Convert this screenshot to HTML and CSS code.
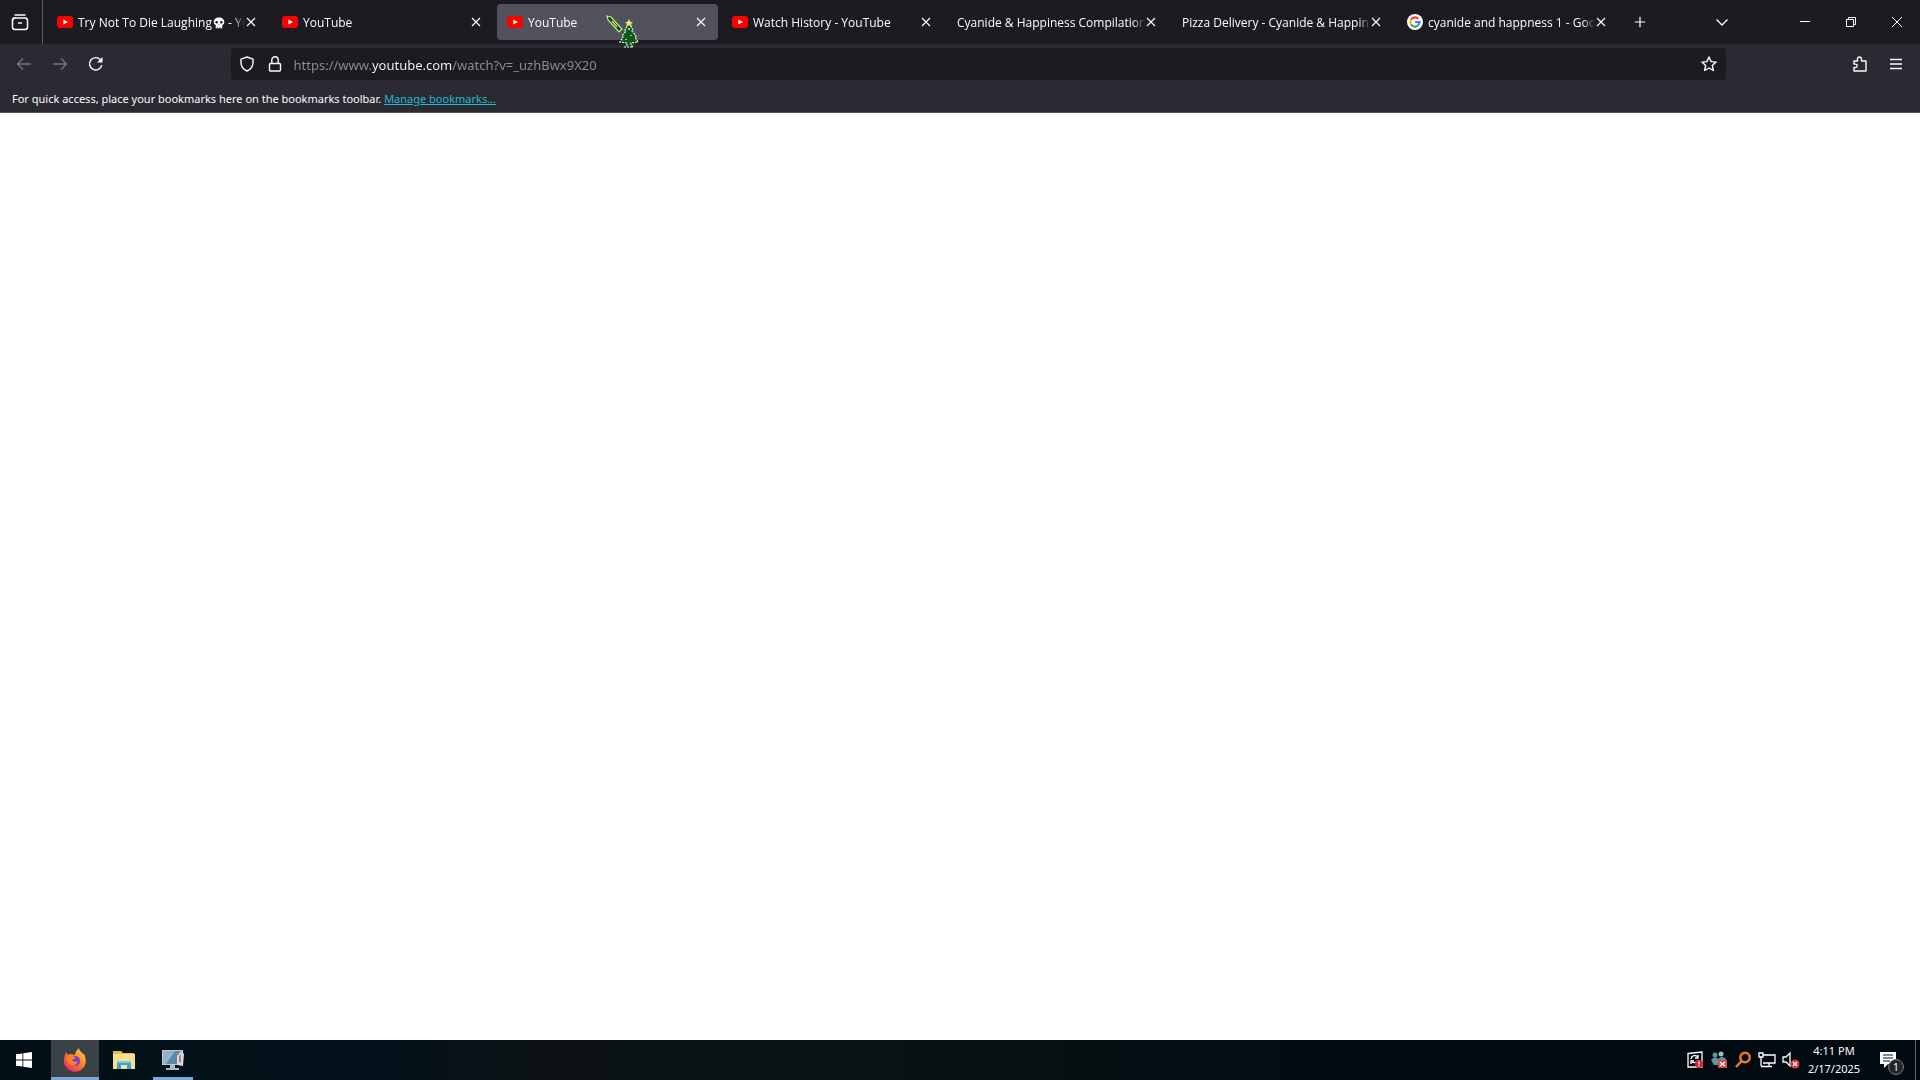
FILE: index.html
```html
<!DOCTYPE html>
<html lang="en">
<head>
<meta charset="utf-8">
<title>YouTube</title>
<link rel="stylesheet" href="styles.css">
</head>
<body>
<svg class="defs" aria-hidden="true">
  <symbol id="yt" viewBox="0 0 16 16"><rect x="0" y="2" width="16" height="12" rx="3" fill="#f00"/><path d="M6.4 5.4v5.2L10.8 8z" fill="#fff"/></symbol>
  <symbol id="x" viewBox="0 0 16 16"><path d="M4 4l8 8M12 4l-8 8" fill="none" stroke="currentColor" stroke-width="1.2"/></symbol>
</svg>

<header class="browser">
  <div class="tabstrip">
    <button class="view" aria-label="Firefox View">
      <svg width="20" height="20" viewBox="0 0 20 20" fill="none" stroke="currentColor" stroke-width="1.5" stroke-linecap="round"><path d="M5 3h10"/><rect x="2.5" y="6" width="15" height="11.5" rx="2.5"/><path d="M2.5 8.5Q2.5 6 5 6M8.500 11h3"/></svg>
    </button>
    <div class="tabs">
      <div class="tab"><svg class="fav"><use href="#yt"/></svg><span class="label">Try Not To Die Laughing<svg class="skull" viewBox="0 0 12 12"><path d="M6 .5C2.7 .5 .7 2.6 .7 5c0 1.500 .8 2.500 2 3v3.300h6.600V8c1.200-.5 2-1.500 2-3C11.300 2.600 9.300 .5 6 .5z" fill="#fff"/><circle cx="3.700" cy="5.300" r="1.300" fill="#1c1b22"/><circle cx="8.300" cy="5.300" r="1.300" fill="#1c1b22"/><path d="M6 7l.6 1H5.400z" fill="#1c1b22"/><path d="M4.700 9.800v1.500M7.300 9.800v1.500" stroke="#1c1b22" stroke-width=".5"/></svg> - YouTube</span><button class="close" aria-label="Close tab"><svg><use href="#x"/></svg></button></div>
      <div class="tab"><svg class="fav"><use href="#yt"/></svg><span class="label">YouTube</span><button class="close" aria-label="Close tab"><svg><use href="#x"/></svg></button></div>
      <div class="tab active"><svg class="fav"><use href="#yt"/></svg><span class="label">YouTube</span><button class="close" aria-label="Close tab"><svg><use href="#x"/></svg></button>
        <svg class="cursor" width="36" height="36" viewBox="0 0 36 36"><path d="M2 2l4 1 11 12-3 3L3 6z" fill="#164a12" stroke="#b8f08a" stroke-width="1.200"/><path d="M7 7l5 6" stroke="#e8d040" stroke-width="1.500"/><path d="M24 9l4 7-1 1 4 5-1 1 3 5-7 1v2l2 2h-8l2-2v-2l-7-1 3-5-1-1 4-5-1-1z" fill="#0b5a1c" stroke="#e4f8d8" stroke-width="1.200" stroke-dasharray="2 1"/><path d="M23 14h2v2h-2zM25 21h2v1h-2zM20 25h2v1h-2z" fill="#5fe0a0"/><path d="M24 5l1.500 3H28l-2 2 1 3-3-2-3 2 1-3-2-2h2.500z" fill="#f4ec50"/></svg>
      </div>
      <div class="tab"><svg class="fav"><use href="#yt"/></svg><span class="label">Watch History - YouTube</span><button class="close" aria-label="Close tab"><svg><use href="#x"/></svg></button></div>
      <div class="tab"><span class="label">Cyanide &amp; Happiness Compilation</span><button class="close" aria-label="Close tab"><svg><use href="#x"/></svg></button></div>
      <div class="tab"><span class="label">Pizza Delivery - Cyanide &amp; Happiness</span><button class="close" aria-label="Close tab"><svg><use href="#x"/></svg></button></div>
      <div class="tab"><svg class="fav" viewBox="0 0 16 16"><circle cx="8" cy="8" r="8" fill="#fff"/><g fill="none" stroke-width="2.200"><path d="M4 5.700A4.600 4.600 0 0 1 11.300 4.800" stroke="#ea4335"/><path d="M4 5.700A4.600 4.600 0 0 0 4 10.300" stroke="#fbbc05"/><path d="M4 10.300A4.600 4.600 0 0 0 11 11.500" stroke="#34a853"/><path d="M8 8h4.600A4.600 4.600 0 0 1 11 11.500" stroke="#4285f4"/></g></svg><span class="label">cyanide and happness 1 - Google</span><button class="close" aria-label="Close tab"><svg><use href="#x"/></svg></button></div>
      <button class="tool" aria-label="New tab"><svg viewBox="0 0 16 16"><path d="M8 2v12M2 8h12"/></svg></button>
    </div>
    <button class="tool list" aria-label="List all tabs"><svg viewBox="0 0 16 16"><path d="M2.500 5.500L8 11l5.500-5.500"/></svg></button>
    <div class="window">
      <button aria-label="Minimize"><svg viewBox="0 0 12 12"><path d="M1 5.500h10"/></svg></button>
      <button aria-label="Restore"><svg viewBox="0 0 12 12"><path d="M1.500 3.500h7v7h-7zM3.500 3.500v-2h7v7h-2"/></svg></button>
      <button aria-label="Close"><svg viewBox="0 0 12 12"><path d="M1 1l10 10M11 1L1 11"/></svg></button>
    </div>
  </div>

  <nav class="navbar">
    <button class="tool" aria-label="Back" disabled><svg viewBox="0 0 16 16"><path d="M15 8H1.500M7 2.500L1.500 8 7 13.500"/></svg></button>
    <button class="tool" aria-label="Forward" disabled><svg viewBox="0 0 16 16"><path d="M1 8h13.500M9 2.500L14.500 8 9 13.500"/></svg></button>
    <button class="tool" aria-label="Reload"><svg viewBox="0 0 16 16"><path d="M13.800 9.200A6.200 6.200 0 1 1 12.500 3.800"/><path d="M14.500 1v5.500H9z" fill="currentColor" stroke="none"/></svg></button>
    <span class="spring"></span>
    <div class="urlbar">
      <button class="tool slim" aria-label="Tracking protection"><svg viewBox="0 0 16 16"><path d="M8 1l6 2.200v3.300c0 4-2.500 7-6 8.500-3.500-1.500-6-4.500-6-8.500V3.200z"/></svg></button>
      <button class="tool slim" aria-label="Site information"><svg viewBox="0 0 16 16"><rect x="2.500" y="7.500" width="11" height="7.500" rx="1"/><path d="M4.800 7.500V4a3.200 3.200 0 0 1 6.400 0v3.500"/></svg></button>
      <input class="address" type="text" aria-label="Address" value="https://www.youtube.com/watch?v=_uzhBwx9X20" spellcheck="false">
      <button class="tool star" aria-label="Bookmark this page"><svg viewBox="0 0 16 16"><path d="M8 1l2.100 4.600 5 .5-3.800 3.400 1.100 5L8 12l-4.400 2.500 1.100-5L.9 6.100l5-.5z"/></svg></button>
    </div>
    <span class="spring"></span>
    <button class="tool" aria-label="Extensions"><svg viewBox="0 0 16 16"><path d="M2 5h3.500V3a2 2 0 0 1 4 0v2H14v10H2v-3.500h1.500a1.700 1.700 0 0 0 0-3.400H2z"/></svg></button>
    <button class="tool" aria-label="Menu"><svg viewBox="0 0 16 16"><path d="M2 3.500h12M2 8h12M2 12.500h12"/></svg></button>
  </nav>

  <div class="bookmarks">For quick access, place your bookmarks here on the bookmarks toolbar. <a href="#">Manage bookmarks...</a></div>
</header>

<main class="page"></main>

<footer class="taskbar">
  <button class="task start" aria-label="Start"><svg width="16" height="16" viewBox="0 0 16 16" fill="#fff"><path d="M0 2.300l6.500-.9v6.100H0zM7.300 1.300L16 0v7.500H7.300zM0 8.400h6.500v6.200L0 13.700zM7.300 8.400H16V16l-8.700-1.300z"/></svg></button>
  <button class="task current" aria-label="Firefox"><svg width="24" height="24" viewBox="0 0 24 24"><defs><linearGradient id="fx" x1="1" y1="0" x2=".2" y2="1"><stop offset="0" stop-color="#ffe04a"/><stop offset=".45" stop-color="#ff8a1e"/><stop offset="1" stop-color="#f0256a"/></linearGradient></defs><path d="M1 13C1 9 2 7 3 4l2 3c1-1 2-1 3-1 2 0 2 1 4 1 0-3 2-5 4-7 0 3 3 4 4 6l1 0c3 6 2 11-1 14-4 5-12 5-16 0-2-2-3-4-3-7z" fill="url(#fx)"/><circle cx="12" cy="13" r="5" fill="#7638d8"/><path d="M5 8c3-2 5 0 7 1 1 1-1 2-3 3 1 2 4 2 6 1-1 5-7 6-10 2-1-2-1-5 0-7z" fill="#ff8020"/></svg></button>
  <button class="task" aria-label="File Explorer"><svg width="24" height="24" viewBox="0 0 24 24"><path d="M1 3h8l2 2h11v16H1z" fill="#e9b94c"/><path d="M1 6h22v15H1z" fill="#fbe08c"/><path d="M5 13h14v8h-4v-4H9v4H5z" fill="#3f9fd0"/><path d="M5 13h14v2H5z" fill="#78c8ea"/></svg></button>
  <button class="task open" aria-label="Control panel"><svg width="24" height="24" viewBox="0 0 24 24"><path d="M1 2h21v15H1z" fill="#b9c9d2"/><path d="M2 3h19v13H2z" fill="#5a89a9"/><path d="M2 3h12L5 16H2z" fill="#93b3c8"/><path d="M9 17h5v3h4v2H5v-2h4z" fill="#a9bbc7"/><path d="M16 8l4-5 3 3-1 12-6-1z" fill="#d5dadb"/><path d="M18 8l2-2v9l-2-1z" fill="#c2796e"/></svg></button>
  <div class="tray">
    <button aria-label="Update status"><svg viewBox="0 0 18 18" fill="none" stroke="#fff" stroke-width="1.300"><path d="M2 2.500L16 1v15H2zM5 8a4 4 0 0 1 7-2M12 4v3H9M12 9a4 4 0 0 1-6 2M5 13v-3h3"/><circle cx="13" cy="13" r="4" fill="#d92535" stroke="none"/><path d="M13 10.500v3M13 14.500v1"/></svg></button>
    <button aria-label="Disconnected app"><svg viewBox="0 0 18 18"><circle cx="5" cy="4" r="2.500" fill="#5e96a2"/><circle cx="11" cy="3" r="2.500" fill="#99bfc1"/><path d="M1 9q4-5 7-1 4-4 8 0l-2 6H4z" fill="#5c95a1"/><path d="M8 9h9v8H8z" fill="#d84a3c"/><path d="M10 11l5 4M15 11l-5 4" stroke="#fff" stroke-width="1.500"/></svg></button>
    <button aria-label="Search tool"><svg viewBox="0 0 18 18" fill="none" stroke="#ee7b23" stroke-width="2.500"><circle cx="11" cy="6.500" r="4.700"/><path d="M7.500 10L2 16"/></svg></button>
    <button aria-label="Network"><svg viewBox="0 0 18 18" fill="none" stroke="#fff" stroke-width="1.300"><path d="M5 4h12v8H5M1 2h4v4H1zM3 6v9M11 12v3M3 15.500h11"/></svg></button>
    <button aria-label="Volume muted"><svg viewBox="0 0 18 18" fill="none" stroke="#fff" stroke-width="1.300"><path d="M1 6h3l4-4v13l-4-4H1z"/><circle cx="13" cy="13" r="4.500" fill="#d93445" stroke="none"/><path d="M11 11l4 4M15 11l-4 4"/></svg></button>
    <time class="clock" datetime="2025-02-17T16:11"><span>4:11 PM</span><span>2/17/2025</span></time>
    <button class="notes" aria-label="Notifications"><svg width="18" height="18" viewBox="0 0 18 18"><path d="M1 1h16v12H9l-4 4v-4H1z" fill="#fff"/><path d="M4 4h10M4 7h10M4 10h7" stroke="#071017" stroke-width="1.200"/></svg><span class="badge">1</span></button>
    <span class="peek"></span>
  </div>
</footer>
</body>
</html>
```
FILE: styles.css
```css
* { box-sizing: border-box; }

body {
  margin: 0;
  min-height: 100vh;
  display: flex;
  flex-direction: column;
  font: 12px/16px "Open Sans", "Noto Sans", sans-serif;
  color: #fbfbfe;
  background: #fff;
}

button {
  display: flex;
  align-items: center;
  justify-content: center;
  flex: none;
  padding: 0;
  border: 0;
  background: none;
  color: inherit;
  font: inherit;
}

.defs { display: none; }

.browser {
  background: #2b2a33;
  border-bottom: 1px solid #55545c;
}

.tabstrip {
  display: flex;
  height: 44px;
  background: #1c1b22;
}

.view {
  width: 43px;
  padding-right: 2px;
  border-right: 1px solid #5b5b66;
}

.tabs {
  display: flex;
  align-items: center;
  flex: 1;
  min-width: 0;
  gap: 4px;
  padding-left: 4px;
}

.tab {
  position: relative;
  display: flex;
  align-items: center;
  flex: 0 1 221px;
  min-width: 0;
  height: 36px;
  padding: 0 11px 0 10px;
  border-radius: 4px;
}

.active { background: #52515e; }

.fav {
  flex: none;
  width: 16px;
  height: 16px;
  margin-right: 5px;
}

.label {
  flex: 1;
  min-width: 0;
  padding-top: 1px;
  overflow: hidden;
  white-space: nowrap;
  mask-image: linear-gradient(to left, transparent, #000 12px);
}

.skull {
  width: 12px;
  height: 12px;
  margin-left: 1px;
  vertical-align: -2px;
}

.close {
  width: 12px;
  height: 24px;
}

.close svg {
  flex: none;
  width: 16px;
  height: 16px;
}

.cursor {
  position: absolute;
  left: 108px;
  top: 10px;
  z-index: 1;
}

.tool {
  width: 36px;
  height: 32px;
}

.tool svg {
  width: 16px;
  height: 16px;
  fill: none;
  stroke: currentColor;
  stroke-width: 1.4;
  stroke-linejoin: round;
}

.tool:disabled { color: #74737b; }

.tabs .tool svg { width: 14px; }

.list {
  align-self: center;
  margin-right: 42px;
}

.window { display: flex; }

.window button { width: 46px; }

.window svg {
  width: 12px;
  height: 12px;
  fill: none;
  stroke: currentColor;
}

.navbar {
  display: flex;
  align-items: center;
  height: 40px;
  padding: 0 6px;
}

.spring { flex: 1; }

.urlbar {
  display: flex;
  align-items: center;
  flex: 0 1 1495px;
  height: 32px;
  padding-left: 2px;
  border-radius: 4px;
  background: #1c1b22;
}

.urlbar .slim { width: 28px; }

.urlbar .star { width: 34px; }

.address {
  flex: 1;
  min-width: 0;
  height: 24px;
  padding: 2px 0 0 5px;
  border: 0;
  outline: 0;
  font: 13px/20px "Noto Sans", "Open Sans", sans-serif;
  color: transparent;
  background: linear-gradient(to right, #8f8e95 83px, #fbfbfe 83px 163px, #8f8e95 163px);
  background-clip: text;
}

.bookmarks {
  padding: 7px 12px 5px;
  font: 11px/16px "Noto Sans", "Open Sans", sans-serif;
}

.bookmarks a { color: #1fb9cf; }

.page {
  flex: 1;
  background: #fff;
}

.taskbar {
  display: flex;
  gap: 1px;
  height: 40px;
  background: linear-gradient(to right, #020f17, #03121a 20%, #0d1315 28%, #091214 45%, #040b12 70%, #020a12);
}

.task {
  width: 48px;
  border-bottom: 3px solid transparent;
  padding-top: 2px;
}

.start { margin-right: 2px; }

.current {
  background: #3a4247;
  border-color: #76a9d8;
}

.open {
  width: 40px;
  margin-left: 4px;
  border-color: #76a9d8;
}

.tray {
  display: flex;
  align-items: center;
  margin-left: auto;
}

.tray button {
  width: 24px;
  height: 40px;
}

.tray svg {
  width: 18px;
  height: 18px;
}

.clock {
  display: flex;
  flex-direction: column;
  align-items: center;
  width: 62px;
  font: 11px/18px "Noto Sans", "Open Sans", sans-serif;
}

.tray .notes {
  position: relative;
  width: 46px;
  margin-right: 4px;
}

.badge {
  position: absolute;
  left: 23px;
  top: 19px;
  width: 16px;
  height: 16px;
  border: 1px solid #767c80;
  border-radius: 8px;
  background: #20282e;
  font-size: 11px;
  line-height: 14px;
}

.peek {
  width: 5px;
  height: 40px;
  border-left: 1px solid #5c6469;
}
```
